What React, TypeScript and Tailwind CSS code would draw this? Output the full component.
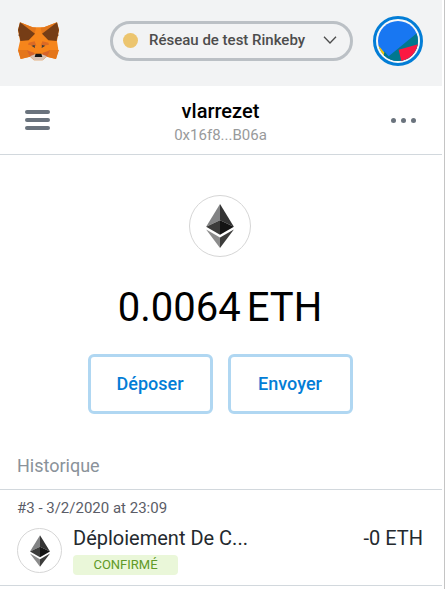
import React from "react";

function Fox() {
  return (
    <svg viewBox="54 64 123 117" className="h-[39px] w-[41px]" role="img" aria-label="MetaMask">
      <polygon points="60,65 98,80 132,80 171,65 177,88 171,121 175,148 168,175 140,168 128,179 102,179 90,168 62,175 54,148 60,121 54,88" fill="#f6851b" />
      <polygon points="60,65 98,80 108,81 104,100" fill="#e2761b" />
      <polygon points="171,65 132,80 122,81 126,100" fill="#e2761b" />
      <polygon points="54,148 84,148 90,168 62,175" fill="#e4761b" />
      <polygon points="177,148 147,148 141,168 168,175" fill="#e4761b" />
      <polygon points="86,126 104,122 109,136 84,132" fill="#dc6a24" />
      <polygon points="145,126 127,122 122,136 147,132" fill="#dc6a24" />
      <polygon points="81,149 104,157 102,168 90,168" fill="#d5632b" />
      <polygon points="150,149 127,157 129,168 141,168" fill="#d5632b" />
      <polygon points="60,65 105,99 86,119 61,121 59,108 55,104 57,100 54,88" fill="#763d16" />
      <polygon points="171,65 126,99 145,119 170,121 172,108 176,104 174,100 177,88" fill="#763d16" />
      <polygon points="90,167 105,161 125,161 141,167 128,179 102,179" fill="#d7c1b3" />
      <polygon points="107,159 124,159 127,169 104,169" fill="#161616" />
      <polygon points="94,135 104,133 105,142" fill="#3c3b3b" />
      <polygon points="136,135 126,133 125,142" fill="#3c3b3b" />
    </svg>
  );
}

function Ether({ className }: { className: string }) {
  return (
    <svg viewBox="0 0 82 130" className={className} aria-hidden="true">
      <path d="M41 0 0 67 41 48Z" fill="#828384" />
      <path d="M41 0 82 67 41 48Z" fill="#343434" />
      <path d="M0 67 41 48V91Z" fill="#3c3c3b" />
      <path d="M82 67 41 48V91Z" fill="#141414" />
      <path d="M0 75 41 99V130Z" fill="#8c8c8c" />
      <path d="M82 75 41 99V130Z" fill="#3c3c3b" />
    </svg>
  );
}

function Avatar() {
  return (
    <svg viewBox="0 0 120 120" className="size-10 rounded-full" aria-hidden="true">
      <rect width="120" height="120" fill="#1877f2" />
      <path d="M120 34 32 106 18 90V120H120Z" fill="#01778e" />
      <path d="M62 86 120 70V120H70Z" fill="#fb1842" />
      <path d="M0 72 18 94V120H0Z" fill="#f5c900" />
    </svg>
  );
}

const actions = ["Déposer", "Envoyer"];

export default function App() {
  return (
    <div className="min-h-screen border-r border-[#c4c4c4] bg-white pr-[2px] font-[Roboto,sans-serif] text-black">
      <header className="flex items-center justify-between bg-[#f2f3f4] pt-4 pr-[19px] pb-5 pl-[18px]">
        <Fox />
        <div className="flex items-center gap-5">
          <button className="flex h-10 w-[243px] items-center rounded-full border-[3px] border-[#bbc0c5] pr-[13px] pb-[2px] pl-[10px] text-[15px] font-medium text-[#4d4d4d]">
            <span className="mr-[11px] size-[15px] rounded-full bg-[#ecc56f]" />
            <span className="whitespace-nowrap">Réseau de test Rinkeby</span>
            <svg viewBox="0 0 14 8" className="ml-auto h-2 w-[14px]" fill="none" stroke="#4d4d4d" strokeWidth="1.3" aria-hidden="true">
              <path d="M1 .8 7 7 13 .8" />
            </svg>
          </button>
          <button aria-label="Mon compte" className="flex size-[50px] items-center justify-center rounded-full border-[3px] border-[#037dd6] bg-[#f7f8f8]">
            <Avatar />
          </button>
        </div>
      </header>

      <nav className="flex h-[69px] items-center justify-between border-b border-[#d2d8dd] pr-[26px] pl-[25px]">
        <button aria-label="Menu" className="flex w-[25px] flex-col gap-1">
          <span className="h-1 rounded-full bg-[#6a737d]" />
          <span className="h-1 rounded-full bg-[#6a737d]" />
          <span className="h-1 rounded-full bg-[#6a737d]" />
        </button>
        <button className="pt-1 text-center">
          <span className="block text-[20px] leading-[26px] font-medium">vlarrezet</span>
          <span className="block text-[15px] leading-[22px] text-[#989a9b]">0x16f8...B06a</span>
        </button>
        <button aria-label="Options du compte" className="flex gap-[5px]">
          <span className="size-[5px] rounded-full bg-[#6a737d]" />
          <span className="size-[5px] rounded-full bg-[#6a737d]" />
          <span className="size-[5px] rounded-full bg-[#6a737d]" />
        </button>
      </nav>

      <main>
        <section className="flex flex-col items-center pt-10 pr-[2px] pb-10">
          <div className="flex size-[62px] items-center justify-center rounded-full border border-[#d6d6d6]">
            <Ether className="h-11 w-7" />
          </div>
          <div className="mt-[27px] flex gap-[6px] text-[40px] leading-[48px]">
            <span>0.0064</span>
            <span>ETH</span>
          </div>
          <div className="mt-[22px] flex gap-[15px]">
            {actions.map((label) => (
              <button key={label} className="h-[60px] w-[125px] rounded-md border-[3px] border-[#b0d7f2] pb-[2px] text-[18px] font-medium text-[#037dd6]">
                {label}
              </button>
            ))}
          </div>
        </section>

        <section>
          <h2 className="border-b border-[#d2d8dd] px-[17px] pb-[11px] text-[18px] leading-6 text-[#8a929a]">Historique</h2>
          <article className="border-b border-[#d2d8dd] pt-2 pr-[19px] pb-[10px] pl-[17px]">
            <p className="text-[15px] leading-5 text-[#5b5d67]">#3 - 3/2/2020 at 23:09</p>
            <div className="mt-[10px] flex gap-[11px]">
              <div className="flex size-[45px] shrink-0 items-center justify-center rounded-full border border-[#d6d6d6]">
                <Ether className="h-8 w-5" />
              </div>
              <div className="-mt-[2px] min-w-0">
                <h3 className="text-[20px] leading-6 whitespace-nowrap text-[#24292e]">Déploiement De C...</h3>
                <span className="mt-[5px] flex h-5 w-[105px] items-center justify-center rounded bg-[#eaf7d9] text-[13px] text-[#609a27]">CONFIRMÉ</span>
              </div>
              <span className="-mt-[2px] ml-auto text-[20px] leading-6 whitespace-nowrap text-[#24292e]">-0 ETH</span>
            </div>
          </article>
        </section>
      </main>
    </div>
  );
}
